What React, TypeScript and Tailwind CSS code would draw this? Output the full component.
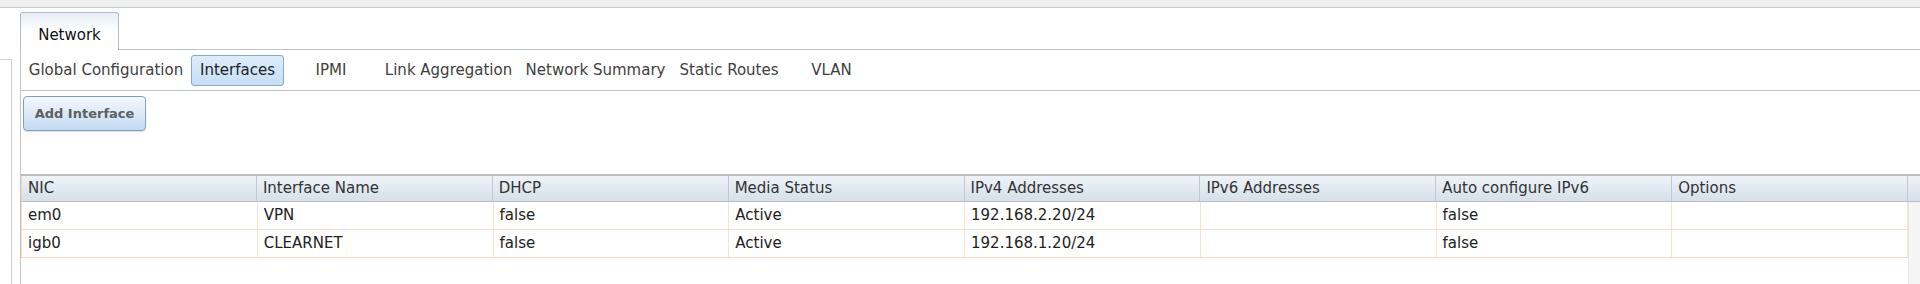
import React from "react";

const subtabs: { label: string; w: string; active?: boolean }[] = [
  { label: "Global Configuration", w: "w-[170px]" },
  { label: "Interfaces", w: "w-[93px]", active: true },
  { label: "IPMI", w: "w-[94px]" },
  { label: "Link Aggregation", w: "w-[141px]" },
  { label: "Network Summary", w: "w-[153px]" },
  { label: "Static Routes", w: "w-[114px]" },
  { label: "VLAN", w: "w-[91px]" },
];

const headers = [
  "NIC",
  "Interface Name",
  "DHCP",
  "Media Status",
  "IPv4 Addresses",
  "IPv6 Addresses",
  "Auto configure IPv6",
  "Options",
];

const rows = [
  ["em0", "VPN", "false", "Active", "192.168.2.20/24", "", "false", ""],
  ["igb0", "CLEARNET", "false", "Active", "192.168.1.20/24", "", "false", ""],
];

export default function App() {
  return (
    <div
      className="w-[1920px] h-[284px] bg-white overflow-hidden flex flex-col text-[#333]"
      style={{ fontFamily: '"DejaVu Sans", Verdana, sans-serif' }}
    >
      {/* top bar */}
      <div className="h-[8px] shrink-0 bg-[#f0f0f0] border-b border-[#c6ccd4]" />
      <div className="flex flex-1 min-h-0">
        {/* left panel */}
        <div className="w-[20px] shrink-0 flex flex-col">
          <div className="h-[51px]" />
          <div className="w-[12px] flex-1 border-t border-r border-[#cfcfcf]" />
        </div>
        {/* main */}
        <div className="flex-1 flex flex-col min-w-0 pt-[4px]">
          {/* tab strip */}
          <div className="flex h-[38px] shrink-0">
            <div className="w-[99px] h-[38px] border-t border-x border-[#b3bdc9] rounded-t-[3px] bg-linear-to-b from-[#e6eef7] via-white to-white flex items-center justify-center pt-[8px] text-[15px] text-[#111]">
              Network
            </div>
            <div className="flex-1 border-b border-[#b9c1ca]" />
          </div>
          {/* content */}
          <div className="flex-1 flex flex-col border-l border-[#c4c4c4]">
            {/* subtabs */}
            <div className="h-[41px] shrink-0 flex items-center border-b border-[#b9c1ca] text-[15px] text-[#404040]">
              {subtabs.map((t) =>
                t.active ? (
                  <div
                    key={t.label}
                    className={`${t.w} h-[31px] flex items-center justify-center rounded-[3px] border border-[#86a9cc] bg-linear-to-b from-[#dcecfb] to-[#c6dff6] text-[#222] shrink-0`}
                  >
                    {t.label}
                  </div>
                ) : (
                  <div key={t.label} className={`${t.w} text-center shrink-0 whitespace-nowrap`}>
                    {t.label}
                  </div>
                )
              )}
            </div>
            {/* button */}
            <div className="pl-[2px] pt-[5px] h-[83px] shrink-0">
              <div className="w-[123px] h-[35px] rounded-[4px] border border-[#7f9fc2] bg-linear-to-b from-[#f3f8fd] to-[#c3dbf2] shadow-[0_1px_1px_rgba(0,0,0,0.12)] flex items-center justify-center text-[13px] font-bold text-[#5f5f5f]">
                Add Interface
              </div>
            </div>
            {/* table */}
            <div className="flex-1 flex flex-col">
              <div className="grid grid-cols-[repeat(8,minmax(0,1fr))_12px] h-[28px] border-t-2 border-b border-[#bdbdbd] bg-linear-to-b from-[#eef3f8] to-[#d5e0ea] text-[15px] text-[#333]">
                {headers.map((h, i) => (
                  <div
                    key={h}
                    className={`flex items-center px-[6px] border-r border-[#c3c7cc] whitespace-nowrap overflow-hidden ${i === 0 ? "border-l border-l-[#e9d9cc]" : ""}`}
                  >
                    {h}
                  </div>
                ))}
                <div />
              </div>
              <div className="flex-1 grid grid-cols-[1fr_12px]">
                <div className="flex flex-col">
                  {rows.map((r, ri) => (
                    <div
                      key={ri}
                      className="grid grid-cols-8 h-[28px] border-b border-l border-[#f3dccb] text-[15px] text-[#222]"
                    >
                      {r.map((c, ci) => (
                        <div
                          key={ci}
                          className="flex items-center px-[6px] border-r border-[#f5e3d6] whitespace-nowrap overflow-hidden"
                        >
                          {c}
                        </div>
                      ))}
                    </div>
                  ))}
                </div>
                <div className="bg-[#f5f5f5] border-l border-[#e4e4e4]" />
              </div>
            </div>
          </div>
        </div>
      </div>
    </div>
  );
}
